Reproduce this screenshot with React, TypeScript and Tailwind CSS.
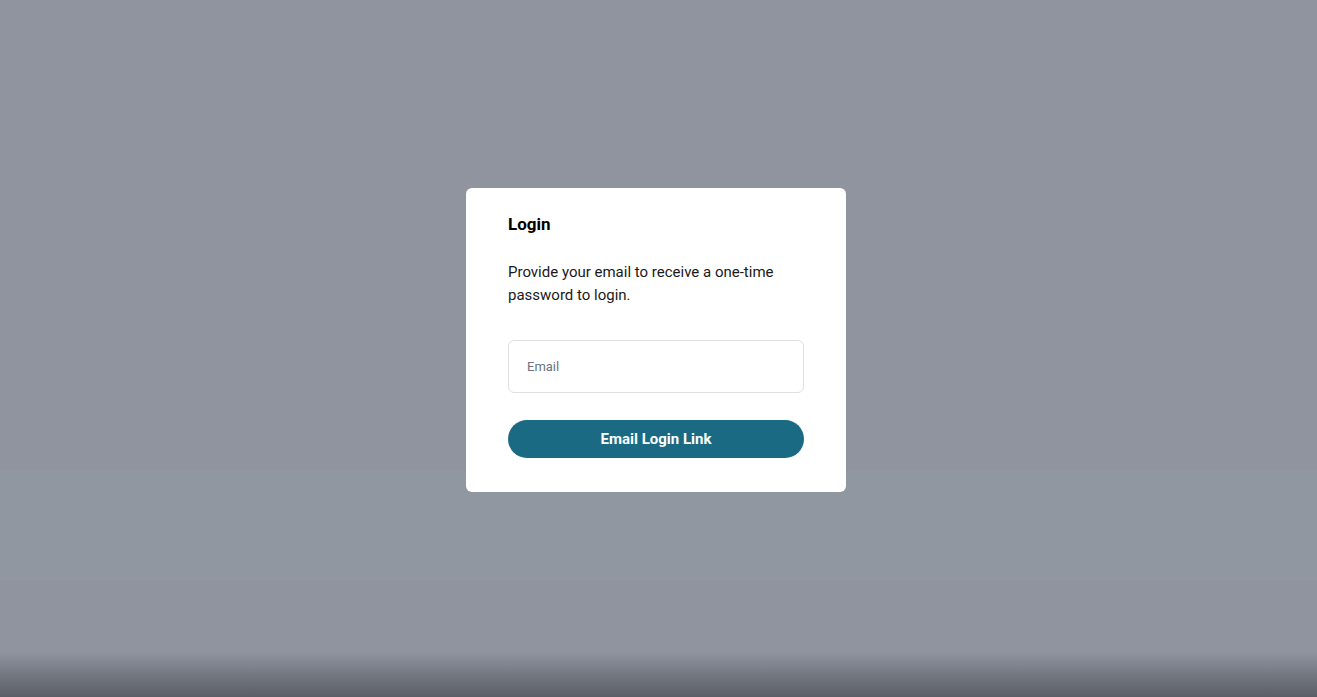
export default function App() {
  return (
    <div className="relative h-[697px] w-full overflow-hidden bg-[#8f949f] font-['Roboto',sans-serif]">
      <div className="absolute inset-x-0 top-[470px] h-[110px] bg-[#939aa3]/60" />
      <div className="absolute inset-x-0 bottom-0 h-[45px] bg-gradient-to-b from-[#8f949f] to-[#5b5e66]" />
      <div className="relative flex h-full items-center justify-center pr-[5px] pb-[17px]">
        <div className="w-[380px] rounded-md bg-white px-[42px] pt-[24px] pb-[34px]">
          <h2 className="text-[17px] leading-6 font-bold text-black">Login</h2>
          <p className="mt-[25px] text-[15px] leading-[23px] text-[#1a1a1a]">
            Provide your email to receive a one-time password to login.
          </p>
          <input
            type="email"
            placeholder="Email"
            className="mt-[33px] block h-[53px] w-full rounded-md border border-[#e0e0e0] px-[18px] text-[13px] text-gray-800 outline-none placeholder:text-[#6b7280]"
          />
          <button className="mt-[27px] flex h-[38px] w-full items-center justify-center rounded-full bg-[#1b6a83] text-[15px] font-bold text-white">
            Email Login Link
          </button>
        </div>
      </div>
    </div>
  );
}
